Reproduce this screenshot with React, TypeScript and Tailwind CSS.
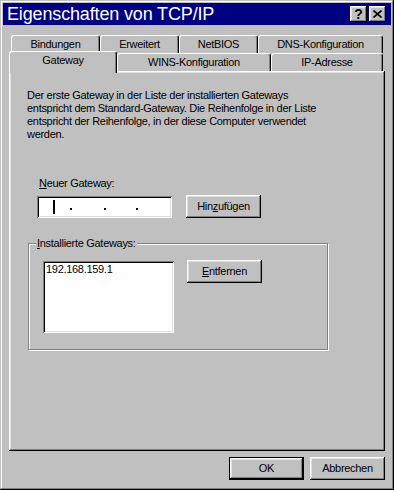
import React from "react";

const raised =
  "bg-[#c0c0c0] shadow-[inset_-1px_-1px_0_#000,inset_1px_1px_0_#fff,inset_-2px_-2px_0_#808080,inset_2px_2px_0_#dfdfdf]";
const sunken =
  "bg-white shadow-[inset_1px_1px_0_#808080,inset_-1px_-1px_0_#fff,inset_2px_2px_0_#000,inset_-2px_-2px_0_#dfdfdf]";

function Tab({ label, w, selected }: { label: string; w: string; selected?: boolean }) {
  return (
    <div
      className={`${w} ${
        selected ? "h-[22px] -mb-[2px] pb-[4px] z-10" : "h-[18px]"
      } relative flex items-center justify-center bg-[#c0c0c0] border-t border-l border-white border-r border-r-black rounded-t-[3px] shadow-[inset_-1px_0_0_#808080] text-[11px] tracking-[-0.3px] text-black`}
    >
      {label}
    </div>
  );
}

function Button({ children, isDefault }: { children: React.ReactNode; isDefault?: boolean }) {
  if (isDefault) {
    return (
      <div className="w-[75px] h-[23px] border border-black">
        <div className={`${raised} w-full h-full flex items-center justify-center text-[11px] tracking-[-0.3px]`}>
          {children}
        </div>
      </div>
    );
  }
  return (
    <div className={`${raised} w-[75px] h-[23px] flex items-center justify-center text-[11px] tracking-[-0.3px]`}>
      {children}
    </div>
  );
}

export default function App() {
  return (
    <div className="w-[394px] h-[490px] bg-[#c0c0c0] pt-[3px] px-[3px] flex flex-col font-['Liberation_Sans',Arial,sans-serif] text-black shadow-[inset_-1px_-1px_0_#000,inset_1px_1px_0_#c0c0c0,inset_-2px_-2px_0_#808080,inset_2px_2px_0_#fff]">
      {/* Title bar */}
      <div className="h-[22px] bg-[#000080] flex items-center pl-[4px] pr-[5px]">
        <span className="text-white text-[18px] tracking-[-0.15px] leading-none">Eigenschaften von TCP/IP</span>
        <div className="ml-auto flex gap-[2px]">
          <div className={`${raised} w-[17px] h-[16px] flex items-center justify-center text-[14px] font-bold leading-none`}>
            ?
          </div>
          <div className={`${raised} w-[17px] h-[16px] flex items-center justify-center`}>
            <svg width="9" height="8" viewBox="0 0 9 8">
              <path d="M0.5 0.5 L8.5 7.5 M8.5 0.5 L0.5 7.5" stroke="#000" strokeWidth="1.6" />
            </svg>
          </div>
        </div>
      </div>

      <div className="pl-[6px] pt-[10px] flex flex-col w-[382px]">
        {/* Back tab row */}
        <div className="flex h-[18px] pl-[2px]">
          <Tab label="Bindungen" w="w-[89px]" />
          <Tab label="Erweitert" w="w-[79px]" />
          <Tab label="NetBIOS" w="w-[79px]" />
          <Tab label="DNS-Konfiguration" w="w-[125px]" />
        </div>
        {/* Front tab row */}
        <div className="flex h-[18px] items-end relative z-10">
          <Tab label="Gateway" w="w-[108px]" selected />
          <Tab label="WINS-Konfiguration" w="w-[154px]" />
          <Tab label="IP-Adresse" w="w-[112px]" />
        </div>

        {/* Panel */}
        <div className="w-[376px] h-[380px] bg-[#c0c0c0] shadow-[inset_-1px_-1px_0_#000,inset_1px_1px_0_#fff,inset_-2px_-2px_0_#808080,inset_2px_2px_0_#dfdfdf] flex flex-col text-[11px] tracking-[-0.3px] leading-[13px]">
          <p className="pl-[18px] pt-[18px]">
            Der erste Gateway in der Liste der installierten Gateways
            <br />
            entspricht dem Standard-Gateway. Die Reihenfolge in der Liste
            <br />
            entspricht der Reihenfolge, in der diese Computer verwendet
            <br />
            werden.
          </p>

          <div className="ml-[28px] mt-[36px] flex flex-col">
            <div className="pl-[2px] h-[13px]">
              <span className="underline">N</span>euer Gateway:
            </div>
            <div className="flex items-start gap-[14px] mt-[5px]">
              <div className={`${sunken} w-[135px] h-[22px] flex items-center pl-[16px] mt-[1px]`}>
                <div className="w-[2px] h-[14px] bg-black" />
                <div className="w-[2px] h-[2px] bg-black ml-[15px] mt-[4px]" />
                <div className="w-[2px] h-[2px] bg-black ml-[32px] mt-[4px]" />
                <div className="w-[2px] h-[2px] bg-black ml-[30px] mt-[4px]" />
              </div>
              <Button>
                Hin<span className="underline">z</span>ufügen
              </Button>
            </div>
          </div>

          {/* Group box */}
          <div className="relative ml-[19px] mt-[25px] w-[300px] h-[107px] border border-[#808080] shadow-[inset_1px_1px_0_#fff,1px_1px_0_#fff]">
            <div className="absolute left-[7px] -top-[7px] bg-[#c0c0c0] px-[1px] leading-[13px]">
              <span className="underline">I</span>nstallierte Gateways:
            </div>
            <div className="flex items-start gap-[13px] pl-[14px] pt-[16px]">
              <div className={`${sunken} w-[131px] h-[72px] mt-[1px] pl-[3px] pt-[2px]`}>192.168.159.1</div>
              <Button>
                <span className="underline">E</span>ntfernen
              </Button>
            </div>
          </div>
        </div>

        {/* Bottom buttons */}
        <div className="flex justify-end gap-[6px] mt-[6px] w-[376px]">
          <Button isDefault>OK</Button>
          <Button>Abbrechen</Button>
        </div>
      </div>
    </div>
  );
}
